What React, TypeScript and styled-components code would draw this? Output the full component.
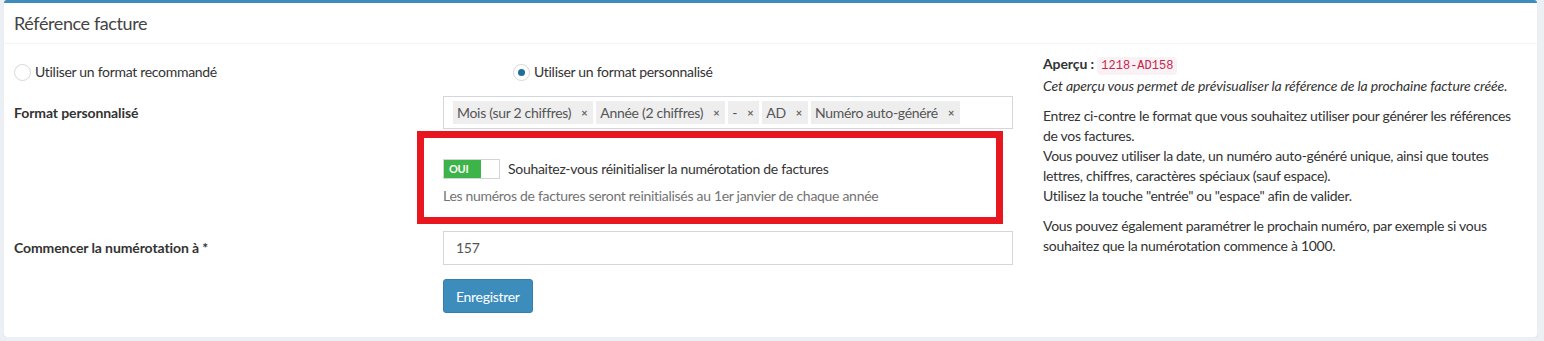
import styled, { createGlobalStyle } from 'styled-components';

const GlobalStyle = createGlobalStyle`
  * {
    box-sizing: border-box;
  }

  body {
    margin: 0;
    background-color: #ecf0f5;
    font-family: 'Lato', 'Liberation Sans', sans-serif;
    font-size: 14px;
    line-height: 20px;
    letter-spacing: -0.3px;
    color: #333333;
  }

  strong {
    letter-spacing: -0.1px;
  }

  em {
    letter-spacing: -0.12px;
  }
`;

const Page = styled.div`
  padding: 0 7px 0 4px;
`;

const Box = styled.section`
  background-color: #ffffff;
  border-top: 3px solid #3c8dbc;
  border-radius: 3px;
  box-shadow: 0 1px 1px rgba(0, 0, 0, 0.1);
  height: 337px;
`;

const BoxHeader = styled.header`
  height: 41px;
  padding: 0 10px;
  border-bottom: 1px solid #f4f4f4;
  display: flex;
  align-items: center;
`;

const BoxTitle = styled.h3`
  margin: 0;
  font-size: 18px;
  font-weight: 400;
  letter-spacing: -0.4px;
  color: #444444;
`;

const BoxBody = styled.div`
  padding: 10px;
  display: grid;
  grid-template-columns: 999px 1fr;
  column-gap: 30px;
`;

const FormColumn = styled.div`
  display: flex;
  flex-direction: column;
`;

const RadioRow = styled.div`
  margin-top: 8px;
  display: grid;
  grid-template-columns: 499px 1fr;
`;

const RadioLabel = styled.label`
  display: flex;
  align-items: center;
  gap: 4px;
  height: 20px;
`;

const RadioCircle = styled.span<{ $checked?: boolean }>`
  width: 17px;
  height: 17px;
  border-radius: 50%;
  border: 1px solid #d7d7d7;
  display: flex;
  align-items: center;
  justify-content: center;

  &::after {
    content: '';
    width: 7px;
    height: 7px;
    border-radius: 50%;
    background-color: ${(p) => (p.$checked ? '#1f6e9c' : 'transparent')};
  }
`;

const FormRow = styled.div<{ $top: number }>`
  margin-top: ${(p) => p.$top}px;
  display: grid;
  grid-template-columns: 429px 570px;
  align-items: center;
`;

const FieldLabel = styled.label`
  font-weight: 700;
  letter-spacing: -0.1px;
`;

const TagInput = styled.div`
  height: 33px;
  border: 1px solid #d2d6de;
  padding: 0 9px;
  display: flex;
  align-items: center;
  gap: 3px;
  white-space: nowrap;
`;

const Tag = styled.span`
  height: 23px;
  padding: 0 6px 0 4px;
  background-color: #eeeeee;
  color: #555555;
  display: flex;
  align-items: center;
`;

const TagRemove = styled.span`
  margin-left: 10px;
  font-size: 11px;
  font-weight: 700;
  color: #666666;
`;

const Highlight = styled.div`
  margin-top: 2px;
  margin-left: -26px;
  width: 586px;
  border: 7px solid #e8161f;
  padding: 21px 19px 11px;
`;

const SwitchRow = styled.div`
  display: flex;
  align-items: center;
  gap: 8px;
`;

const Switch = styled.span`
  width: 57px;
  height: 20px;
  border: 1px solid #d4d4d4;
  display: flex;
`;

const SwitchOn = styled.span`
  width: 37px;
  background-color: #3cb44a;
  color: #ffffff;
  font-size: 11px;
  font-weight: 700;
  line-height: 18px;
  padding-left: 5px;
`;

const HelpText = styled.p`
  margin: 7px 0 0;
  color: #737373;
`;

const TextInput = styled.div`
  height: 34px;
  border: 1px solid #d2d6de;
  padding: 0 12px;
  display: flex;
  align-items: center;
  color: #555555;
`;

const ButtonRow = styled.div`
  margin-top: 14px;
  padding-left: 429px;
`;

const SaveButton = styled.button`
  height: 34px;
  padding: 0 12px;
  background-color: #3c8dbc;
  border: 1px solid #367fa9;
  border-radius: 3px;
  color: #ffffff;
  font-family: inherit;
  font-size: 14px;
  letter-spacing: -0.3px;
`;

const InfoColumn = styled.div`
  display: flex;
  flex-direction: column;
  gap: 10px;
`;

const Para = styled.p`
  margin: 0;
`;

const Code = styled.code`
  padding: 2px 4px;
  font-family: 'Liberation Mono', monospace;
  font-size: 12px;
  letter-spacing: 0;
  color: #c7254e;
  background-color: #f9f2f4;
  border-radius: 4px;
`;

const tags = ['Mois (sur 2 chiffres)', 'Année (2 chiffres)', '-', 'AD', 'Numéro auto-généré'];

export default function App() {
  return (
    <>
      <GlobalStyle />
      <Page>
        <Box>
          <BoxHeader>
            <BoxTitle>Référence facture</BoxTitle>
          </BoxHeader>
          <BoxBody>
            <FormColumn>
              <RadioRow>
                <RadioLabel>
                  <RadioCircle />
                  Utiliser un format recommandé
                </RadioLabel>
                <RadioLabel>
                  <RadioCircle $checked />
                  Utiliser un format personnalisé
                </RadioLabel>
              </RadioRow>

              <FormRow $top={14}>
                <FieldLabel>Format personnalisé</FieldLabel>
                <TagInput>
                  {tags.map((t) => (
                    <Tag key={t}>
                      {t}
                      <TagRemove>×</TagRemove>
                    </Tag>
                  ))}
                </TagInput>
              </FormRow>

              <FormRow $top={0}>
                <span />
                <Highlight>
                  <SwitchRow>
                    <Switch>
                      <SwitchOn>OUI</SwitchOn>
                    </Switch>
                    Souhaitez-vous réinitialiser la numérotation de factures
                  </SwitchRow>
                  <HelpText>
                    Les numéros de factures seront reinitialisés au 1er janvier de chaque année
                  </HelpText>
                </Highlight>
              </FormRow>

              <FormRow $top={7}>
                <FieldLabel>Commencer la numérotation à *</FieldLabel>
                <TextInput>157</TextInput>
              </FormRow>

              <ButtonRow>
                <SaveButton>Enregistrer</SaveButton>
              </ButtonRow>
            </FormColumn>

            <InfoColumn>
              <Para>
                <strong>Aperçu :</strong> <Code>1218-AD158</Code>
                <br />
                <em>Cet aperçu vous permet de prévisualiser la référence de la prochaine facture créée.</em>
              </Para>
              <Para>
                Entrez ci-contre le format que vous souhaitez utiliser pour générer les références
                <br />
                de vos factures.
                <br />
                Vous pouvez utiliser la date, un numéro auto-généré unique, ainsi que toutes
                <br />
                lettres, chiffres, caractères spéciaux (sauf espace).
                <br />
                Utilisez la touche "entrée" ou "espace" afin de valider.
              </Para>
              <Para>
                Vous pouvez également paramétrer le prochain numéro, par exemple si vous
                <br />
                souhaitez que la numérotation commence à 1000.
              </Para>
            </InfoColumn>
          </BoxBody>
        </Box>
      </Page>
    </>
  );
}
